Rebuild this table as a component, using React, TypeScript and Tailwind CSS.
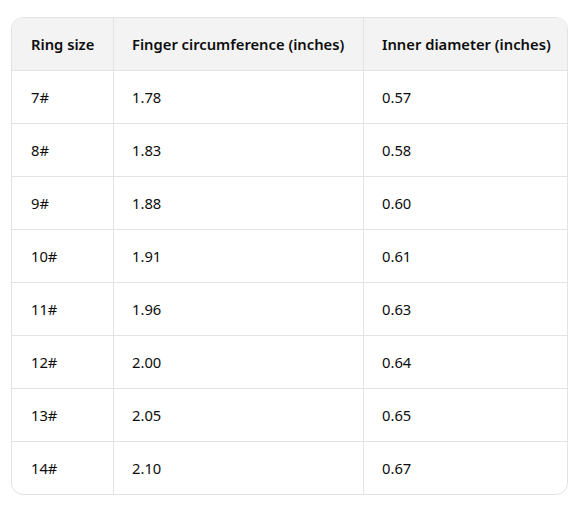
import React from 'react';

const rows = [
  ['7#', '1.78', '0.57'],
  ['8#', '1.83', '0.58'],
  ['9#', '1.88', '0.60'],
  ['10#', '1.91', '0.61'],
  ['11#', '1.96', '0.63'],
  ['12#', '2.00', '0.64'],
  ['13#', '2.05', '0.65'],
  ['14#', '2.10', '0.67'],
];

const headers = ['Ring size', 'Finger circumference (inches)', 'Inner diameter (inches)'];

export default function App() {
  return (
    <div className="w-[582px] h-[524px] bg-white pt-[17px] pl-[11px] font-['Noto_Sans',sans-serif] text-[14.75px] text-[#0d0d0d]">
      <div className="w-[557px] border border-[#e3e3e3] rounded-[12px] overflow-hidden">
        <div className="grid grid-cols-[102px_250px_1fr] bg-[#f3f3f3] border-b border-[#e3e3e3]">
          {headers.map((h, i) => (
            <div
              key={h}
              className={`h-[52px] flex items-center font-semibold ${i === 0 ? 'pl-[19px]' : 'pl-[18px]'} ${i < 2 ? 'border-r border-[#e3e3e3]' : ''}`}
            >
              {h}
            </div>
          ))}
        </div>
        {rows.map((r, idx) => (
          <div
            key={r[0]}
            className={`grid grid-cols-[102px_250px_1fr] ${idx < rows.length - 1 ? 'border-b border-[#e3e3e3]' : ''}`}
          >
            {r.map((c, i) => (
              <div
                key={i}
                className={`h-[52px] flex items-center ${i === 0 ? 'pl-[19px]' : 'pl-[18px]'} ${i < 2 ? 'border-r border-[#e3e3e3]' : ''}`}
              >
                {c}
              </div>
            ))}
          </div>
        ))}
      </div>
    </div>
  );
}
